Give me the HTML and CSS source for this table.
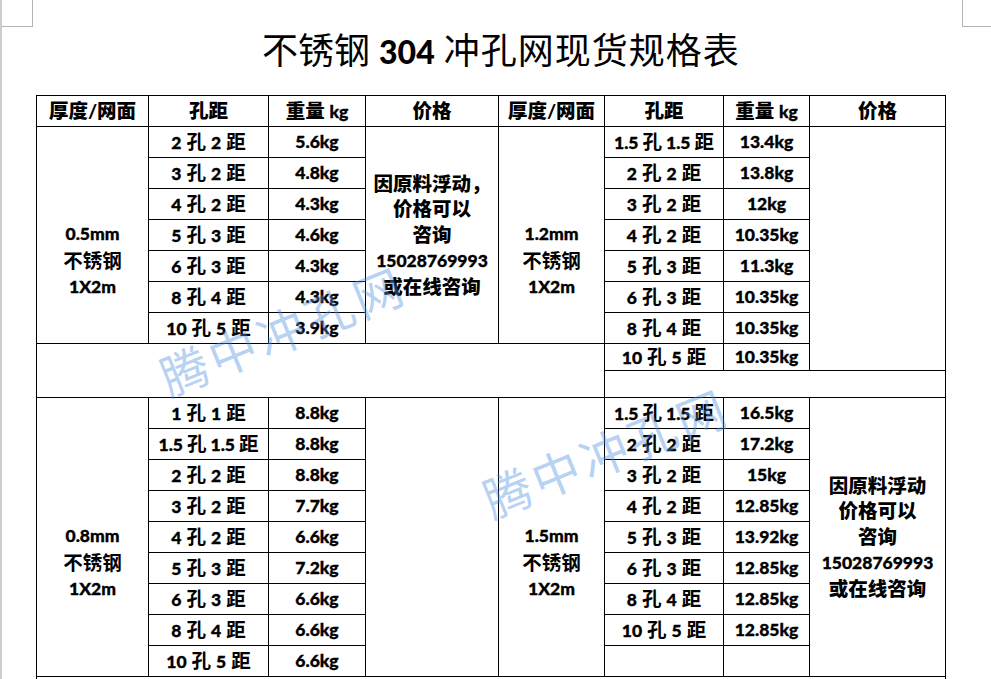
FILE: index.html
```html
<!DOCTYPE html>
<html lang="zh-CN">
<head>
<meta charset="utf-8">
<title>不锈钢304冲孔网现货规格表</title>
<link rel="stylesheet" href="styles.css">
</head>
<body>
<div class="page">
  <div class="mark mark-l"></div>
  <div class="mark mark-r"></div>
  <h1 class="title"><span class="tc">不锈钢</span><span class="tn">304</span><span class="tc tc2">冲孔网现货规格表</span></h1>
  <table class="spec">
    <colgroup>
      <col class="w1"><col class="w2"><col class="w3"><col class="w4">
      <col class="w5"><col class="w6"><col class="w7"><col class="w8">
    </colgroup>
    <tr>
      <th>厚度/网面</th><th>孔距</th><th>重量 <span class="l">kg</span></th><th>价格</th>
      <th>厚度/网面</th><th>孔距</th><th>重量 <span class="l">kg</span></th><th>价格</th>
    </tr>
    <tr>
      <td rowspan="7" class="t">0.5mm<br><span class="c">不锈钢</span><br>1X2m</td>
      <td>2<span class="c">孔</span>2<span class="c">距</span></td><td>5.6kg</td>
      <td rowspan="7" class="p">因原料浮动，<br>价格可以<br>咨询<br><span class="l">15028769993</span><br>或在线咨询</td>
      <td rowspan="7" class="t">1.2mm<br><span class="c">不锈钢</span><br>1X2m</td>
      <td class="tight">1.5<span class="c">孔</span>1.5<span class="c">距</span></td><td>13.4kg</td>
      <td rowspan="8"></td>
    </tr>
    <tr>
      <td>3<span class="c">孔</span>2<span class="c">距</span></td><td>4.8kg</td>
      <td>2<span class="c">孔</span>2<span class="c">距</span></td><td>13.8kg</td>
    </tr>
    <tr>
      <td>4<span class="c">孔</span>2<span class="c">距</span></td><td>4.3kg</td>
      <td>3<span class="c">孔</span>2<span class="c">距</span></td><td>12kg</td>
    </tr>
    <tr>
      <td>5<span class="c">孔</span>3<span class="c">距</span></td><td>4.6kg</td>
      <td>4<span class="c">孔</span>2<span class="c">距</span></td><td>10.35kg</td>
    </tr>
    <tr>
      <td>6<span class="c">孔</span>3<span class="c">距</span></td><td>4.3kg</td>
      <td>5<span class="c">孔</span>3<span class="c">距</span></td><td>11.3kg</td>
    </tr>
    <tr>
      <td>8<span class="c">孔</span>4<span class="c">距</span></td><td>4.3kg</td>
      <td>6<span class="c">孔</span>3<span class="c">距</span></td><td>10.35kg</td>
    </tr>
    <tr>
      <td>10<span class="c">孔</span>5<span class="c">距</span></td><td>3.9kg</td>
      <td>8<span class="c">孔</span>4<span class="c">距</span></td><td>10.35kg</td>
    </tr>
    <tr class="short">
      <td colspan="5" rowspan="2"></td>
      <td>10<span class="c">孔</span>5<span class="c">距</span></td><td>10.35kg</td>
    </tr>
    <tr class="short">
      <td colspan="3"></td>
    </tr>
    <tr>
      <td rowspan="9" class="t">0.8mm<br><span class="c">不锈钢</span><br>1X2m</td>
      <td>1<span class="c">孔</span>1<span class="c">距</span></td><td>8.8kg</td>
      <td rowspan="9"></td>
      <td rowspan="9" class="t">1.5mm<br><span class="c">不锈钢</span><br>1X2m</td>
      <td class="tight">1.5<span class="c">孔</span>1.5<span class="c">距</span></td><td>16.5kg</td>
      <td rowspan="9" class="p">因原料浮动<br>价格可以<br>咨询<br><span class="l">15028769993</span><br>或在线咨询</td>
    </tr>
    <tr>
      <td class="tight">1.5<span class="c">孔</span>1.5<span class="c">距</span></td><td>8.8kg</td>
      <td>2<span class="c">孔</span>2<span class="c">距</span></td><td>17.2kg</td>
    </tr>
    <tr>
      <td>2<span class="c">孔</span>2<span class="c">距</span></td><td>8.8kg</td>
      <td>3<span class="c">孔</span>2<span class="c">距</span></td><td>15kg</td>
    </tr>
    <tr>
      <td>3<span class="c">孔</span>2<span class="c">距</span></td><td>7.7kg</td>
      <td>4<span class="c">孔</span>2<span class="c">距</span></td><td>12.85kg</td>
    </tr>
    <tr>
      <td>4<span class="c">孔</span>2<span class="c">距</span></td><td>6.6kg</td>
      <td>5<span class="c">孔</span>3<span class="c">距</span></td><td>13.92kg</td>
    </tr>
    <tr>
      <td>5<span class="c">孔</span>3<span class="c">距</span></td><td>7.2kg</td>
      <td>6<span class="c">孔</span>3<span class="c">距</span></td><td>12.85kg</td>
    </tr>
    <tr>
      <td>6<span class="c">孔</span>3<span class="c">距</span></td><td>6.6kg</td>
      <td>8<span class="c">孔</span>4<span class="c">距</span></td><td>12.85kg</td>
    </tr>
    <tr>
      <td>8<span class="c">孔</span>4<span class="c">距</span></td><td>6.6kg</td>
      <td>10<span class="c">孔</span>5<span class="c">距</span></td><td>12.85kg</td>
    </tr>
    <tr>
      <td>10<span class="c">孔</span>5<span class="c">距</span></td><td>6.6kg</td>
      <td></td><td></td>
    </tr>
    <tr>
      <td colspan="8"></td>
    </tr>
  </table>
  <div class="wm wm1">腾中冲孔网</div>
  <div class="wm wm2">腾中冲孔网</div>
</div>
</body>
</html>
```

FILE: styles.css
```css
html, body {
  margin: 0;
  padding: 0;
  background: #ffffff;
}

.page {
  position: relative;
  height: 679px;
  overflow: hidden;
  box-sizing: border-box;
  border-left: 2px solid #cdcdcd;
  padding-left: 34px;
}

.mark {
  position: absolute;
  top: 0;
  height: 26px;
  border-bottom: 1px solid #b4b4b4;
}

.mark-l {
  left: 0;
  width: 30px;
  border-right: 1px solid #b4b4b4;
}

.mark-r {
  left: 960px;
  width: 30px;
  border-left: 1px solid #b4b4b4;
}

.title {
  margin: 30px 0 29px 226px;
  height: 36px;
  font-size: 36px;
  line-height: 36px;
  font-weight: 400;
  white-space: nowrap;
  color: #000;
}

.tc {
  font-family: "Noto Sans CJK SC", sans-serif;
  font-weight: 400;
}

.tc2 {
  letter-spacing: 1px;
}

.tn {
  font-family: "Lato", sans-serif;
  font-weight: 900;
  font-size: 32px;
  margin: 0 9px;
}

.spec {
  border-collapse: collapse;
  table-layout: fixed;
  width: 910px;
  font-family: "Lato", "Noto Sans CJK SC", sans-serif;
  font-weight: 900;
  font-size: 17.5px;
  color: #000;
  -webkit-text-stroke: 0.35px #000;
}

.w1 { width: 112px; }
.w2 { width: 120px; }
.w3 { width: 97px; }
.w4 { width: 133px; }
.w5 { width: 106px; }
.w6 { width: 119px; }
.w7 { width: 86px; }
.w8 { width: 136px; }

.spec tr {
  height: 31px;
}

.spec tr.short {
  height: 27px;
}

.spec td,
.spec th {
  border: 1px solid #000;
  padding: 0;
  text-align: center;
  vertical-align: middle;
  line-height: 25.5px;
  white-space: nowrap;
}

.spec tr.short td {
  line-height: 20px;
}

.spec th {
  font-size: 19.5px;
  font-weight: 900;
  -webkit-text-stroke: 0;
}

.c {
  font-family: "Noto Sans CJK SC", sans-serif;
  font-weight: 700;
  font-size: 19.5px;
  margin: 0 5px;
  -webkit-text-stroke: 0;
}

.c:last-child {
  margin-right: 0;
}

.tight .c {
  margin: 0 4px;
}

.tight .c:last-child {
  margin-right: 0;
}

.l {
  font-family: "Lato", sans-serif;
  font-size: 17.5px;
  -webkit-text-stroke: 0.35px #000;
}

.t {
  padding-top: 51px !important;
}

.t .c {
  margin: 0;
}

.p {
  font-size: 19.5px;
  -webkit-text-stroke: 0;
}

.wm {
  position: absolute;
  font-family: "Noto Sans CJK SC", sans-serif;
  font-weight: 400;
  font-size: 48px;
  letter-spacing: 4px;
  line-height: 48px;
  white-space: nowrap;
  color: rgba(80, 145, 225, 0.42);
  pointer-events: none;
  transform: translate(-50%, -50%) rotate(-22deg);
}

.wm1 {
  left: 280px;
  top: 329px;
}

.wm2 {
  left: 603px;
  top: 451px;
}
```
